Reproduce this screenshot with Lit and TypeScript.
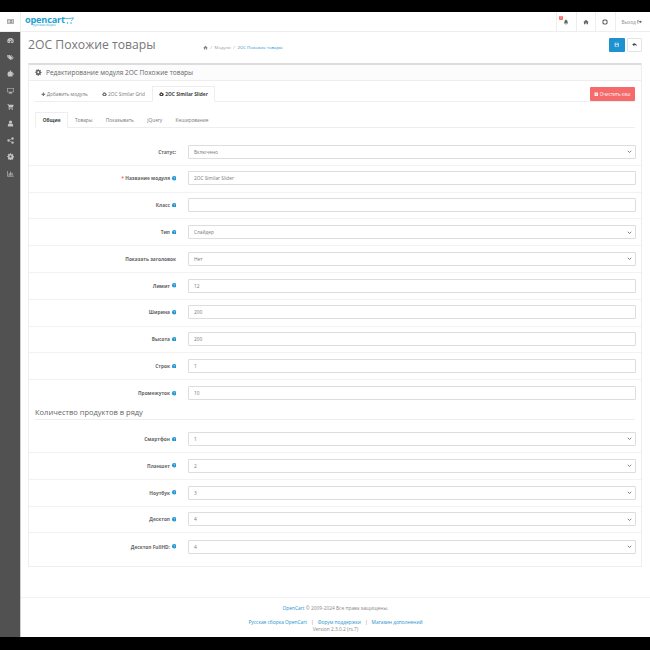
import { LitElement, html, css, svg } from "lit";
import { customElement } from "lit/decorators.js";

const gear = "M12 8.500a3.500 3.500 0 1 0 0 7 3.500 3.500 0 0 0 0-7zM10 1h4l.6 3 2 .9 2.600-1.700 2.800 2.800-1.700 2.600.8 2 3 .5v4l-3 .6-.9 2 1.800 2.600-2.900 2.800-2.500-1.700-2 .8-.6 3h-4l-.6-3-2-.8-2.500 1.700L2.900 19.300l1.700-2.600-.8-2-3-.6v-4l3-.5.8-2L2.900 5 5.700 2.200l2.600 1.700 2-.9z";
const icons: Record<string, unknown> = {
  dash: svg`<path fill-rule="evenodd" d="M12 3a11 11 0 0 0-11 11c0 2.500.8 4.800 2.200 6.600h17.600A11 11 0 0 0 23 14 11 11 0 0 0 12 3zM5 13a1.700 1.700 0 1 1 0 3.400A1.700 1.700 0 0 1 5 13zm7-6a1.700 1.700 0 1 1 0 3.400A1.700 1.700 0 0 1 12 7zm6.500 1.500 1.200 1-5 5.500a3 3 0 1 1-1.500-1.200zM19 13a1.700 1.700 0 1 1 0 3.400 1.700 1.700 0 0 1 0-3.400z"/>`,
  home: svg`<path d="M12 3 1 13h3v8h6v-6h4v6h6v-8h3z"/>`,
  gear: svg`<path fill-rule="evenodd" d="${gear}"/>`,
  tag: svg`<path fill-rule="evenodd" d="M1 3h8l10 10-7.500 7.500L1 10zM5 5.500a1.700 1.700 0 1 0 0 3.400 1.700 1.700 0 0 0 0-3.400z"/><path d="M12 3h2l9 10-7 7.500-1.500-1.500 5.500-6z"/>`,
  puzzle: svg`<path d="M9 2c0-1 5-1 5 1 0 1-1 2-1 3h6v6c1 0 2-1 3-1 2 0 2 5 0 5-1 0-2-1-3-1v7H3v-7H1c-1 0-1-1 0-2l2-1V6h7c0-1-1-3-1-4z"/>`,
  desktop: svg`<path fill-rule="evenodd" d="M1 3h22v15h-8v2h3v2H6v-2h3v-2H1zM3 5v11h18V5z"/>`,
  cart: svg`<path d="M1 3h4l1 3h17l-3 9H8l-.5 2H20v2H5l1-5L3.500 5H1z"/><circle cx="8" cy="21" r="2"/><circle cx="18" cy="21" r="2"/>`,
  user: svg`<circle cx="12" cy="7" r="5.500"/><path d="M3 22v-5c0-3 3-4 5-5 2 1.500 6 1.500 8 0 2 1 5 2 5 5v5z"/>`,
  share: svg`<circle cx="5" cy="12" r="4"/><circle cx="19" cy="5" r="4"/><circle cx="19" cy="19" r="4"/><path d="M5 11 19 4v2L5 13zM5 11l14 7v2L5 13z"/>`,
  chart: svg`<path d="M1 3h2v17h20v2H1zM6 12h3v6H6zM11 6h3v12h-3zM16 10h3v8h-3z"/>`,
  bell: svg`<path d="M12 2c-1 0-1.500.7-1.500 1.500C7 4.500 6 7 6 10c0 5-2 6-3 8h18c-1-2-3-3-3-8 0-3-1-5.500-4.500-6.500C13.500 2.700 13 2 12 2zM9.500 19.500a2.500 2.500 0 0 0 5 0z"/>`,
  life: svg`<path fill-rule="evenodd" d="M12 1a11 11 0 1 0 0 22 11 11 0 0 0 0-22zm0 5.500a5.500 5.500 0 1 1 0 11 5.500 5.500 0 0 1 0-11zM10 3.300a9 9 0 0 1 4 0v3h-4zM3.300 10h3v4h-3a9 9 0 0 1 0-4zM17.700 10h3a9 9 0 0 1 0 4h-3zM10 17.700h4v3a9 9 0 0 1-4 0z"/>`,
  exit: svg`<path d="M2 4h7v2H4v12h5v2H2zM13 6l9 6-9 6v-4H7v-4h6z"/>`,
  save: svg`<path fill-rule="evenodd" d="M3 3h15l3 3v15H3zM7 5v5h9V5zM7 13v6h10v-6z"/>`,
  reply: svg`<path d="M10 4 1 11l9 7v-5c5 0 8 1 11 6 0-7-4-11-11-12z"/>`,
  plus: svg`<path d="M9 3h6v6h6v6h-6v6H9v-6H3V9h6z"/>`,
  bars: svg`<path fill-rule="evenodd" d="M1 4h22v16H1zM3 6v12h18V6zM5 8h3v2H5zM5 11h3v2H5zM5 14h3v2H5zM10 8h9v2h-9zM10 11h9v2h-9zM10 14h9v2h-9z"/>`,
  eraser: svg`<path d="M3 3h18v18H3z"/><path d="m8 8 8 8M16 8l-8 8" stroke="#f56b6b" stroke-width="2.500"/>`,
};

function icon(name: string, cls = "") {
  return html`<svg class="ic ${cls}" viewBox="0 0 24 24" fill="currentColor">${icons[name]}</svg>`;
}

const help = html`<svg class="help" viewBox="0 0 10 10"><circle cx="5" cy="5" r="5" fill="#1e91cf"/><path d="M3.500 3.800C3.700 2.500 6.500 2.400 6.500 4c0 1.200-1.500 1-1.500 2.200M5 7v1" stroke="#fff" fill="none" stroke-width="1"/></svg>`;

type Row = { label: string; value: string; select?: boolean; help?: boolean; req?: boolean };
const rowsA: Row[] = [
  { label: "Статус:", value: "Включено", select: true },
  { label: "Название модуля", value: "2OC Similar Slider", help: true, req: true },
  { label: "Класс", value: "", help: true },
  { label: "Тип", value: "Слайдер", select: true, help: true },
  { label: "Показать заголовок", value: "Нет", select: true },
  { label: "Лимит", value: "12", help: true },
  { label: "Ширина", value: "200", help: true },
  { label: "Высота", value: "200", help: true },
  { label: "Строк", value: "1", help: true },
  { label: "Промежуток", value: "10", help: true },
];
const rowsB: Row[] = [
  { label: "Смартфон", value: "1", select: true, help: true },
  { label: "Планшет", value: "2", select: true, help: true },
  { label: "Ноутбук", value: "3", select: true, help: true },
  { label: "Десктоп", value: "4", select: true, help: true },
  { label: "Десктоп FullHD:", value: "4", select: true, help: true },
];

@customElement("app-root")
export class AppRoot extends LitElement {
  static styles = css`
    :host { display: block; width: 650px; height: 650px; overflow: hidden; background: #fff;
      font-family: "Open Sans", sans-serif; font-size: 4.800px; color: #777; }
    * { box-sizing: border-box; }
    .page { display: flex; flex-direction: column; height: 650px; }
    .black { background: #000; flex: none; }
    .top { height: 12px; }
    .bottom { height: 13px; }
    .ic { width: 1em; height: 1em; display: inline-block; vertical-align: -0.12em; flex: none; }

    header { height: 20px; flex: none; display: flex; align-items: stretch; border-bottom: 1px solid #eee; background: #fff; }
    .toggle { width: 21px; border-right: 1px solid #eee; display: flex; align-items: center; justify-content: center; font-size: 7px; color: #6d6d6d; }
    .logo { display: flex; flex-direction: column; padding: 4px 0 0 4px; color: #23a1d1; position: relative; width: 70px; }
    .logo b { font-size: 9.200px; line-height: 7.500px; font-weight: 700; letter-spacing: -0.2px; }
    .logo span { font-size: 3.100px; line-height: 3px; padding-left: 8px; white-space: nowrap; }
    .logo svg { position: absolute; left: 42px; top: 4.500px; width: 11px; height: 7px; }
    .spacer { flex: 1; }
    .hbtn { width: 19.500px; border-left: 1px solid #eee; display: flex; align-items: center; justify-content: center; font-size: 6px; color: #666; position: relative; }
    .badge { position: absolute; left: 2px; top: 3.500px; width: 4px; height: 4px; background: #f56b6b; color: #fff; font-size: 3.500px; line-height: 4px; text-align: center; border-radius: 1px; }
    .hbtn.exit { width: 35.500px; gap: 1px; font-size: 4.600px; color: #888; justify-content: flex-start; padding-left: 6px; }
    .exit .ic { font-size: 5.500px; color: #666; }

    .body { flex: 1; display: flex; min-height: 0; }
    aside { width: 21px; flex: none; background: #515151; border-right: 1px solid #ccc; display: flex; flex-direction: column; align-items: center; padding-top: 0.500px; color: #c4c4c4; font-size: 7px; }
    aside div { height: 16.550px; display: flex; align-items: center; justify-content: center; flex: none; }
    main { flex: 1; min-width: 0; display: flex; flex-direction: column; }
    .head { height: 31px; flex: none; display: flex; align-items: center; padding: 0 8px 5px 7px; }
    h1 { font-size: 12.200px; font-weight: 400; margin: 0; color: #777; line-height: 16px; width: 175px; white-space: nowrap; }
    .crumbs { display: flex; align-items: center; gap: 2.500px; font-size: 4.300px; color: #999; flex: 1; padding-top: 4px; }
    .crumbs a { color: #1e91cf; }
    .crumbs .ic { font-size: 5px; color: #888; }
    .btn { width: 15.500px; height: 14px; border-radius: 1px; display: flex; align-items: center; justify-content: center; font-size: 5.500px; }
    .primary { background: #1e91cf; color: #cfe7f5; margin-right: 2px; }
    .default { background: #fff; border: 1px solid #e4e4e4; color: #444; }

    .panel { margin: 0 8px 0 7px; height: 503.500px; flex: none; border: 1px solid #eee; border-top: 2px solid #ddd; border-radius: 1px; }
    .ptitle { height: 16px; background: #fcfcfc; border-bottom: 1px solid #eee; display: flex; align-items: center; gap: 4.500px; padding-left: 6px; font-size: 6.500px; color: #666; }
    .pbody { padding: 5px 0 0; }
    .tabs1 { display: flex; align-items: flex-end; margin: 0 6px; position: relative; height: 16px; border-bottom: 1px solid #eee; }
    .tabs1 a, .tabs2 a { display: flex; align-items: center; gap: 1px; height: 16px; margin-bottom: -1px; position: relative; white-space: nowrap; }
    .tabs1 a { padding: 0 6.500px; }
    .tabs1 a:first-child { padding-left: 6px; margin-right: 1.500px; }
    .tabs1 a.on { margin-left: 0.500px; }
    .tabs1 a.on, .tabs2 a.on { border: 1px solid #eee; border-bottom: 1px solid #fff; color: #444; font-weight: 700; background: #fff; }
    .cache { position: absolute; right: 0; top: 0.500px; width: 45.500px; height: 14.500px; background: #f56b6b; border-radius: 1px; color: #fff; display: flex; align-items: center; justify-content: center; gap: 1px; font-size: 4.500px; }
    .tabs2 { display: flex; align-items: flex-end; height: 16px; margin: 10px 6px 0; border-bottom: 1px solid #eee; }
    .tabs2 a { padding: 0 6.700px; }
    .form { padding-top: 11px; }
    .row { display: flex; align-items: center; height: 26.800px; border-bottom: 1px solid #f2f2f2; padding-bottom: 0.500px; }
    .row:last-child { border-bottom: 0; }
    .lbl { width: 159px; flex: none; padding-right: 12px; color: #666; font-weight: 700; font-size: 4.800px; white-space: nowrap; display: flex; justify-content: flex-end; align-items: center; gap: 1.500px; }
    .req { color: #f56b6b; }
    .help { width: 4.500px; height: 4.500px; flex: none; }
    .field { width: 448px; height: 14px; flex: none; border: 1px solid #ddd; border-radius: 1px; background: #fff; display: flex; align-items: center; justify-content: space-between; padding: 0 3px 0 5px; color: #777; }
    .chev { width: 5px; height: 5px; fill: none; stroke: #555; stroke-width: 1.500; }
    h3 { font-weight: 400; font-size: 7.500px; color: #666; margin: 0 6px; height: 13px; line-height: 11px; border-bottom: 1px solid #eee; white-space: nowrap; }
    .rowsb { padding-top: 6.300px; }

    footer { flex: 1; margin-top: 30px; border-top: 1px solid #f2f2f2; text-align: center; font-size: 4.850px; color: #888; line-height: 7px; padding-top: 7px; }
    footer a { color: #1e91cf; }
    footer p { margin: 0; }
    .links { margin-top: 7px; }
    .links i { font-style: normal; margin: 0 4px; }
  `;

  private renderRow(r: Row) {
    return html`<div class="row">
      <div class="lbl">
        ${r.req ? html`<span class="req">*</span>` : ""}<span>${r.label}</span>${r.help ? help : ""}
      </div>
      <div class="field">
        <span>${r.value}</span>
        ${r.select ? html`<svg class="chev" viewBox="0 0 10 10"><path d="M1.500 3.500 5 7l3.500-3.500"/></svg>` : ""}
      </div>
    </div>`;
  }

  render() {
    return html`<div class="page">
      <div class="black top"></div>
      <header>
        <div class="toggle">${icon("bars")}</div>
        <div class="logo">
          <b>opencart</b><span>русская сборка</span>
          <svg viewBox="0 0 22 14" fill="none" stroke="#23a1d1" stroke-width="1.500"><path d="M1 2c6 1.500 13 1.500 20-.5-1 3-3 5-5 6"/><circle cx="9" cy="12" r="1.500" fill="#23a1d1" stroke="none"/><circle cx="16" cy="12" r="1.500" fill="#23a1d1" stroke="none"/></svg>
        </div>
        <div class="spacer"></div>
        <div class="hbtn">${icon("bell")}<span class="badge">1</span></div>
        <div class="hbtn">${icon("home")}</div>
        <div class="hbtn">${icon("life")}</div>
        <div class="hbtn exit">Выход ${icon("exit")}</div>
      </header>
      <div class="body">
        <aside>
          ${["dash", "tag", "puzzle", "desktop", "cart", "user", "share", "gear", "chart"].map((n) => html`<div>${icon(n)}</div>`)}
        </aside>
        <main>
          <div class="head">
            <h1>2OC Похожие товары</h1>
            <div class="crumbs">${icon("home")}<span>/</span><span>Модули</span><span>/</span><a>2OC Похожие товары</a></div>
            <div class="btn primary">${icon("save")}</div>
            <div class="btn default">${icon("reply")}</div>
          </div>
          <section class="panel">
            <div class="ptitle">${icon("gear")}<span>Редактирование модуля 2OC Похожие товары</span></div>
            <div class="pbody">
              <div class="tabs1">
                <a>${icon("plus")}Добавить модуль</a>
                <a>${icon("gear")}2OC Similar Grid</a>
                <a class="on">${icon("gear")}2OC Similar Slider</a>
                <div class="cache">${icon("eraser")}Очистить кэш</div>
              </div>
              <div class="tabs2">
                <a class="on">Общие</a><a>Товары</a><a>Показывать</a><a>jQuery</a><a>Кеширование</a>
              </div>
              <div class="form">
                <div>${rowsA.map((r) => this.renderRow(r))}</div>
                <h3>Количество продуктов в ряду</h3>
                <div class="rowsb">${rowsB.map((r) => this.renderRow(r))}</div>
              </div>
            </div>
          </section>
          <footer>
            <p><a>OpenCart</a> © 2009-2024 Все права защищены.</p>
            <p class="links"><a>Русская сборка OpenCart</a><i>|</i><a>Форум поддержки</a><i>|</i><a>Магазин дополнений</a></p>
            <p>Version 2.3.0.2 (rs.7)</p>
          </footer>
        </main>
      </div>
      <div class="black bottom"></div>
    </div>`;
  }
}
